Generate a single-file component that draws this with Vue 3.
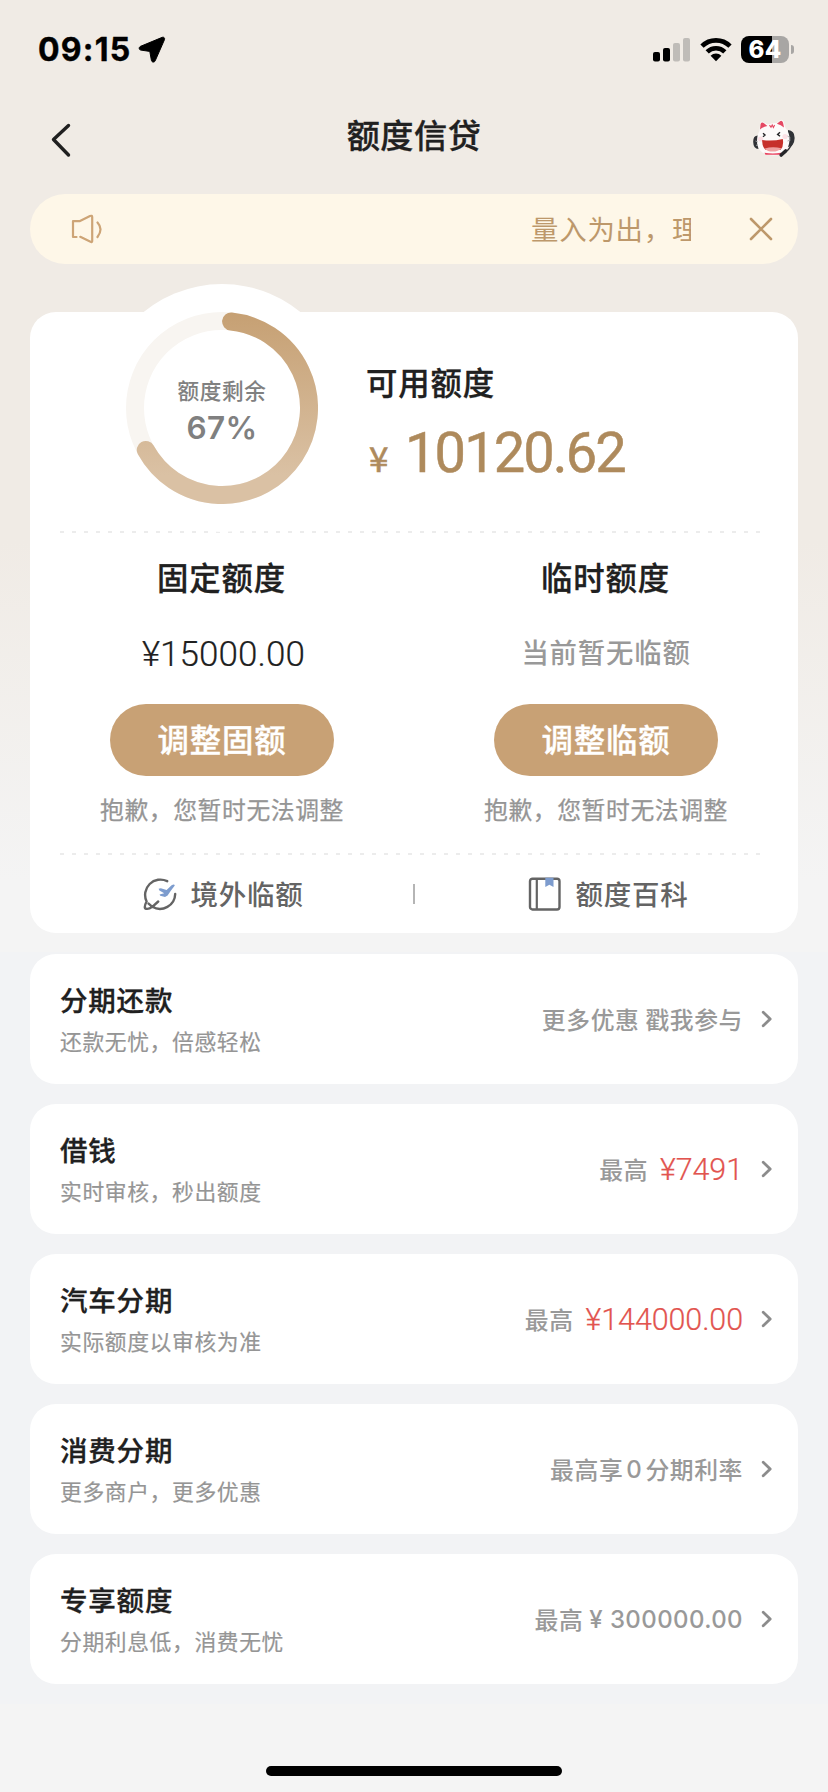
<script setup>
const columns = [
  { title: '固定额度', amount: '¥15000.00', empty: '', action: '调整固额' },
  { title: '临时额度', amount: '', empty: '当前暂无临额', action: '调整临额' },
]

const products = [
  { title: '分期还款', desc: '还款无忧，倍感轻松', hint: '更多优惠 戳我参与', price: '' },
  { title: '借钱', desc: '实时审核，秒出额度', hint: '最高', price: '¥7491' },
  { title: '汽车分期', desc: '实际额度以审核为准', hint: '最高', price: '¥144000.00' },
  { title: '消费分期', desc: '更多商户，更多优惠', hint: '最高享', num: '0', tail: '分期利率', price: '' },
  { title: '专享额度', desc: '分期利息低，消费无忧', hint: '最高', num: '¥ 300000.00', wide: true, price: '' },
]

// Progress arc: clockwise from the top, inset by the round cap
const percent = 67
const point = (deg) => {
  const a = (deg * Math.PI) / 180
  return `${(96 + 87 * Math.sin(a)).toFixed(2)} ${(96 - 87 * Math.cos(a)).toFixed(2)}`
}
const arc = `M${point(6)} A87 87 0 1 1 ${point(percent * 3.6)}`
</script>

<template>
  <div class="page">
    <header class="status">
      <span class="time">09:15</span>
      <svg class="loc" width="28" height="28" viewBox="0 0 28 28"><path d="M24.3 1.3 2.6 10.3C.6 11.2.8 13.8 2.9 14.1L11.8 15.4 13.4 24.3C13.8 26.5 16.3 26.7 17.2 24.8L26.5 3.6C27 2 25.8.8 24.3 1.3Z" stroke="#000" stroke-width="1" /></svg>
      <span class="spacer"></span>
      <svg class="signal" width="38" height="24" viewBox="0 0 38 24">
        <rect x="0" y="14" width="7" height="9.5" rx="2" /><rect x="10" y="10" width="7" height="13.5" rx="2" />
        <rect x="20" y="5" width="7" height="18.5" rx="2" fill="#bfbcb8" /><rect x="30" y="0" width="7" height="23.5" rx="2" fill="#bfbcb8" />
      </svg>
      <svg class="wifi" width="32" height="25" viewBox="0 0 32 25">
        <path d="M2 9.2A19.8 19.8 0 0 1 30 9.2M7.2 14.8A12.6 12.6 0 0 1 24.8 14.8" fill="none" stroke="#000" stroke-width="4.6" />
        <path d="M10.6 18.7A7.6 7.6 0 0 1 21.4 18.7L16 24.2Z" />
      </svg>
      <span class="battery">64</span><span class="nub"></span>
    </header>

    <nav class="nav">
      <svg class="back" width="24" height="38" viewBox="0 0 24 38"><path d="M20.5 4.5 5.5 18.5 20.5 34" /></svg>
      <h1>额度信贷</h1>
      <svg class="cat" width="44" height="40" viewBox="0 0 44 40">
        <path d="M6.5 17.5Q1 17 1.2 24T6.5 31ZM36 12Q43 12.5 42.6 20.5T36 29Z" fill="#303236" />
        <path d="M7.5 13 8.2 5Q9.5 2.5 12 4.5L15.5 6.5Q20 4.5 25 5L28 2.3Q30.5.8 31.8 4L33.5 10Q38 15 37.5 22.5C37 31.5 31 37.5 21.5 37.5S5 32.5 5 23.5Q5 17 7.5 13Z" fill="#fdfafa" />
        <path d="M8 11.5 8.6 6Q9.8 3.6 12 5.3L15.4 8Q11 8.8 8 11.5ZM24.9 5.8 28 3.2Q30 2 31 4.6L32 9.6Q29 7 24.9 5.8Z" fill="#e54863" />
        <path d="M17.5 7.2 19 9.2 20.2 7 21.4 9.4 22.6 7" fill="none" stroke="#e54863" stroke-width="1.1" />
        <circle cx="8.6" cy="21" r="2.6" fill="#fbe0e5" /><circle cx="33" cy="18.5" r="2.6" fill="#fbe0e5" />
        <path d="M11 15.2 13 17 11 18.8M28 14.2 25.6 16.4 28 18.2" fill="none" stroke="#252528" stroke-width="1.4" />
        <path d="M10.2 22Q20.5 23.5 30.8 21 32 28 28.6 31.8H13.5Q9.8 28 10.2 22Z" fill="#c6302b" />
        <path d="M12.8 30.4Q20.5 28.4 29.4 30.2 26 33.6 20.8 33.6T12.8 30.4Z" fill="#eea0a0" />
        <path d="M12.5 34.8Q21 36.2 29 34.8V36.8H13.5Z" fill="#e9425f" />
        <path d="M39.5 27Q37 32 32 35.5" fill="none" stroke="#303236" stroke-width="1.5" />
        <path d="M33.6 33 29.2 37" stroke="#252528" stroke-width="3.6" stroke-linecap="round" />
        <path d="M35.5 18 38.5 20M35.5 23 38.5 22M3.5 23 6 24M4 27.5 6 26.5" stroke="#a8a8aa" stroke-width=".9" />
      </svg>
    </nav>

    <section class="notice">
      <svg class="speaker" width="34" height="32" viewBox="0 0 34 32"><path d="M7.5 24H4V8.2H10.5L21 3Q23.2 2.2 23.2 4V28Q23.2 29.6 21.5 28.8L11.3 23.8M28.5 9.5Q34.5 16 28.5 24" /></svg>
      <div class="marquee"><span>量入为出，理</span></div>
      <svg class="close" width="24" height="24" viewBox="0 0 24 24"><path d="M2 2 22 22M22 2 2 22" /></svg>
    </section>

    <main>
      <section class="card quota">
        <div class="halo"></div>
        <div class="summary">
          <div class="ring">
            <svg width="192" height="192" viewBox="0 0 192 192">
              <defs><linearGradient id="gold" gradientUnits="userSpaceOnUse" x1="96" y1="0" x2="96" y2="192"><stop offset="0" stop-color="#c6a073" /><stop offset="0.85" stop-color="#dac1a4" /><stop offset="1" stop-color="#dac1a4" /></linearGradient></defs>
              <circle cx="96" cy="96" r="87" fill="none" stroke="#f8f5f1" stroke-width="18" />
              <path :d="arc" fill="none" stroke="url(#gold)" stroke-width="18" stroke-linecap="round" />
            </svg>
            <div class="ring-text"><span>额度剩余</span><b>{{ percent }}%</b></div>
          </div>
          <div class="available">
            <h2>可用额度</h2>
            <p><i>¥</i><strong>10120.62</strong></p>
          </div>
        </div>
        <div class="dash"></div>
        <div class="columns">
          <div v-for="c in columns" :key="c.title" class="column">
            <h2>{{ c.title }}</h2>
            <p v-if="c.amount" class="fixed-amount">{{ c.amount }}</p>
            <p v-else class="none">{{ c.empty }}</p>
            <button>{{ c.action }}</button>
            <p class="sorry">抱歉，您暂时无法调整</p>
          </div>
        </div>
        <div class="dash"></div>
        <div class="links">
          <div class="link">
            <svg width="34" height="34" viewBox="0 0 34 34">
              <path d="M24.2 4.2A15.3 15.3 0 0 0 3.6 24.5Q1.2 29 2 31.2 4.6 33.2 9.6 29.6L15.2 24.5M5.6 26.6 9.3 29.8A15.3 15.3 0 0 0 32.2 17" fill="none" stroke="#646464" stroke-width="2.4" stroke-linecap="round" stroke-linejoin="round" />
              <path d="M15.6 11.8 17.8 11.3 23.6 13 28.6 8.2Q31.4 6.6 31.8 8.6L28 13.6 24.6 18.6 22 20 17.2 18.8 16.6 17.4 21.2 16.2 16.4 13.6Z" fill="#7d9cce" />
            </svg>
            <span>境外临额</span>
          </div>
          <span class="bar"></span>
          <div class="link">
            <svg width="34" height="34" viewBox="0 0 34 34">
              <rect x="2" y="1.7" width="29.5" height="30.8" rx="2.5" fill="none" stroke="#646464" stroke-width="2.4" /><path d="M8.8 2V32" stroke="#646464" stroke-width="2.2" />
              <path d="M17.3.8H25.5V10L21.4 7.7 17.3 10Z" fill="#7d9cce" />
            </svg>
            <span>额度百科</span>
          </div>
        </div>
      </section>

      <div class="products">
        <section v-for="p in products" :key="p.title" class="card product">
          <div class="info"><h3>{{ p.title }}</h3><p>{{ p.desc }}</p></div>
          <div class="value">
            <span>{{ p.hint }}</span><span v-if="p.num" :class="['num', { wide: p.wide }]">{{ p.num }}</span><span v-if="p.tail">{{ p.tail }}</span>
            <span v-if="p.price" class="price">{{ p.price }}</span>
          </div>
          <svg class="arrow" width="14" height="20" viewBox="0 0 14 20"><path d="M3.2 3.2 10.2 10 3.2 16.8" /></svg>
        </section>
      </div>
    </main>
    <footer><span class="home"></span></footer>
  </div>
</template>

<style>
body { background: #f4f4f4; }
</style>

<style scoped>
* { box-sizing: border-box; margin: 0; padding: 0; }
.page {
  width: 828px; height: 1792px; overflow: hidden; display: flex; flex-direction: column;
  font-family: "Noto Sans CJK SC", Inter, sans-serif; color: #202020;
  background: linear-gradient(#f0ebe5 0, #f0ebe5 540px, #f4f4f4 880px);
}
h1, h2, h3 { font-weight: 500; white-space: nowrap; -webkit-text-stroke: .3px currentColor; }
svg { display: block; flex: none; }
.status { height: 98px; padding: 36px 34px 0 38px; display: flex; align-items: flex-start; }
.time { font: 700 32px/28px Inter, sans-serif; color: #000; width: 100px; white-space: nowrap; letter-spacing: 1.2px; -webkit-text-stroke: .4px #000; }
.spacer { flex: 1; }
.signal { margin-top: 2px; }
.wifi { margin: 1px 9px 0 9px; }
.battery {
  width: 48px; height: 27px; border-radius: 8px; color: #fff; text-align: center;
  font: 800 24px/27px Inter, sans-serif; letter-spacing: .4px; background: linear-gradient(90deg, #000 31px, #a8a6a4 31px);
}
.nub { width: 3px; height: 9px; margin: 9px 0 0 2px; background: #a8a6a4; border-radius: 0 4px 4px 0; }
.nav { height: 96px; padding: 0 32px 0 48px; display: flex; justify-content: space-between; align-items: flex-start; }
.back { margin-top: 23px; margin-right: 4px; }
.back path { fill: none; stroke: #202020; stroke-width: 3.4; stroke-linecap: round; stroke-linejoin: round; }
h1 { font-size: 33.2px; letter-spacing: .5px; line-height: 48px; margin-top: 12px; }
.cat { margin-top: 20px; }
.notice { height: 70px; margin: 0 30px; padding: 0 25px 0 39px; border-radius: 35px; background: #fef7e8; display: flex; align-items: center; }
.speaker path { fill: none; stroke: #cda476; stroke-width: 2.2; stroke-linecap: round; stroke-linejoin: round; }
.marquee { flex: 1; margin: 0 58px 0 428px; overflow: hidden; white-space: nowrap; font-size: 27.4px; letter-spacing: .8px; line-height: 40px; color: #bd986b; padding-bottom: 3px; }
.close path { fill: none; stroke: #bd986b; stroke-width: 2.6; stroke-linecap: round; }
main { margin-top: 48px; }
.card { background: #fff; border-radius: 26px; margin: 0 30px; }
.quota { position: relative; height: 621px; }
.halo { position: absolute; left: 68px; top: -28px; width: 248px; height: 248px; border-radius: 50%; background: #fff; }
.summary { position: relative; height: 219px; padding-left: 96px; display: flex; }
.ring { display: grid; width: 192px; height: 192px; }
.ring > * { grid-area: 1 / 1; }
.ring-text { display: flex; flex-direction: column; align-items: center; color: #808080; padding-top: 62px; }
.ring-text span { font-size: 21.6px; letter-spacing: .6px; line-height: 32px; font-weight: 500; }
.ring-text b { font: 600 31.5px/38px Inter, sans-serif; letter-spacing: .3px; margin-top: 3px; }
.available { margin-left: 48px; padding-top: 47px; }
h2 { font-size: 31.4px; letter-spacing: .9px; line-height: 46px; }
.available p { height: 60px; margin-top: 18px; padding-left: 3px; display: flex; align-items: baseline; color: #ae8a5c; font-family: Roboto, sans-serif; line-height: 60px; }
.available i { font-style: normal; font-size: 35px; width: 36px; font-family: "Noto Sans CJK SC", sans-serif; line-height: 40px; -webkit-text-stroke: .6px currentColor; }
.available strong { font-weight: 400; font-size: 56px; letter-spacing: -1.9px; -webkit-text-stroke: .5px currentColor; }
.dash { height: 2px; margin: 0 38px 0 30px; background: repeating-linear-gradient(90deg, #ececec 0, #ececec 4px, transparent 4px, transparent 12px); }
.columns { height: 320px; display: flex; }
.column { flex: 1; display: flex; flex-direction: column; align-items: center; padding-top: 21px; }
.column h2 { margin-left: -1px; }
.fixed-amount, .none { height: 46px; margin-top: 28px; line-height: 46px; white-space: nowrap; }
.fixed-amount { font-family: Roboto, sans-serif; font-weight: 300; font-size: 35px; letter-spacing: .1px; margin: 32px 0 -4px 3px; -webkit-text-stroke: .2px currentColor; }
.none { font-size: 27.4px; letter-spacing: .8px; color: #999; font-weight: 500; }
button { width: 224px; height: 72px; margin-top: 30px; border: 0; border-radius: 36px; background: #c8a175; color: #fff; font: 500 31.4px/69px "Noto Sans CJK SC", sans-serif; letter-spacing: .8px; -webkit-text-stroke: .4px #fff; padding-bottom: 3px; }
.sorry { margin-top: 15px; font-size: 23.8px; letter-spacing: .6px; line-height: 36px; color: #959595; white-space: nowrap; -webkit-text-stroke: .25px currentColor; }
.links { height: 78px; display: flex; align-items: center; padding-bottom: 1px; }
.link { flex: 1; display: flex; align-items: center; justify-content: center; gap: 13px; font-size: 27.5px; letter-spacing: .8px; line-height: 40px; font-weight: 500; color: #646464; padding-left: 4px; }
.link span { margin-top: -2px; }
.bar { width: 2px; height: 20px; background: #b5b5b5; }
.products { margin-top: 19px; padding: 2px 0 20px; display: flex; flex-direction: column; gap: 20px; background: #f2f3f5; }
.product { height: 130px; padding: 0 24px 0 30px; display: flex; align-items: center; }
.info { flex: 1; padding-bottom: 3px; }
h3 { font-size: 27.5px; letter-spacing: .8px; line-height: 42px; }
.info p { font-size: 21.8px; letter-spacing: .6px; line-height: 34px; margin-top: 4px; color: #959595; -webkit-text-stroke: .2px currentColor; }
.value { display: flex; align-items: center; font-size: 23.8px; letter-spacing: .6px; line-height: 36px; font-weight: 500; color: #999; white-space: pre; }
.num { font-family: Inter, sans-serif; font-size: 24px; margin: 1px 3px 0; }
.num.wide { letter-spacing: .4px; margin: 1px 0 0 6px; }
.price { font-family: Roboto, sans-serif; font-weight: 300; font-size: 30.5px; color: #e2544f; margin: 2px 0 0 12px; letter-spacing: -.1px; -webkit-text-stroke: .2px currentColor; }
.arrow { margin-left: 17px; }
.arrow path { fill: none; stroke: #8c8c8c; stroke-width: 2.8; stroke-linecap: round; stroke-linejoin: round; }
footer { flex: 1; display: flex; justify-content: center; align-items: flex-end; padding-bottom: 16px; }
.home { width: 296px; height: 10px; border-radius: 5px; background: #000; }
</style>
